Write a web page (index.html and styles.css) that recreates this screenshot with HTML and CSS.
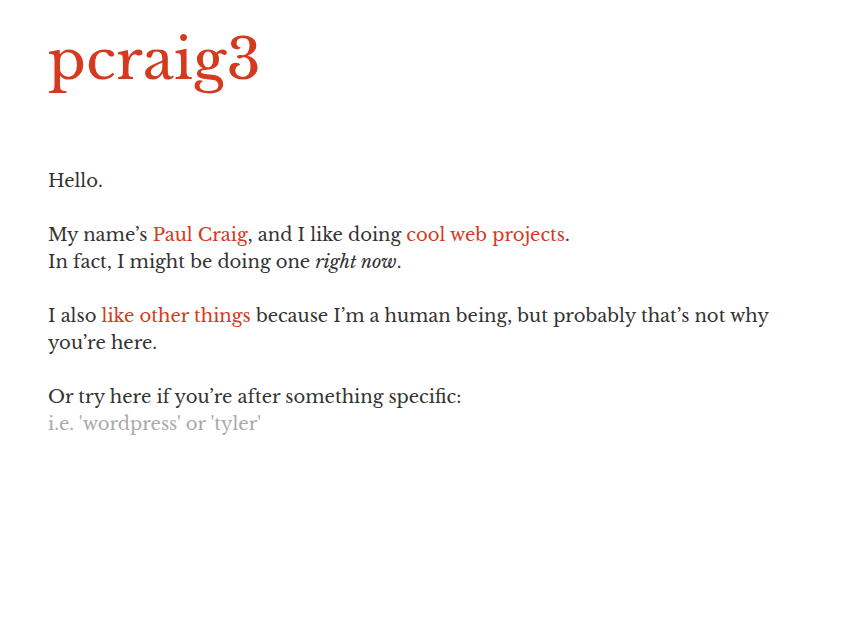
FILE: index.html
```html
<!DOCTYPE html>
<html lang="en">
<head>
<meta charset="utf-8">
<title>pcraig3</title>
<link rel="stylesheet" href="styles.css">
</head>
<body>
<header><h1><a href="#">pcraig3</a></h1></header>
<main>
<p>Hello.</p>
<p>My name’s <a href="#">Paul Craig</a>, and I like doing <a href="#">cool web projects</a>.<br>In fact, I might be doing one <em>right now</em>.</p>
<p>I also <a href="#">like other things</a> because I’m a human being, but probably that’s not why you’re here.</p>
<form>
<label for="search">Or try here if you’re after something specific:</label>
<input id="search" type="text" placeholder="i.e. 'wordpress' or 'tyler'">
</form>
</main>
</body>
</html>
```
FILE: styles.css
```css
body {
  margin: 0;
  padding: 16px 48px;
  background: #fff;
  color: #333;
  font-family: "Libre Baskerville", "Liberation Serif", serif;
  font-size: 18px;
  line-height: 27px;
}
a {
  color: #d63a1e;
  text-decoration: none;
}
h1 {
  margin: 0 0 64px;
  font-size: 56px;
  font-weight: 400;
  line-height: 88px;
}
p {
  margin: 0 0 27px;
}
label {
  display: block;
}
input {
  display: block;
  width: 100%;
  height: 27px;
  margin: 0;
  padding: 0;
  border: 0;
  outline: 0;
  background: transparent;
  color: #333;
  font: inherit;
}
input::placeholder {
  color: #aaa;
  opacity: 1;
}
```
